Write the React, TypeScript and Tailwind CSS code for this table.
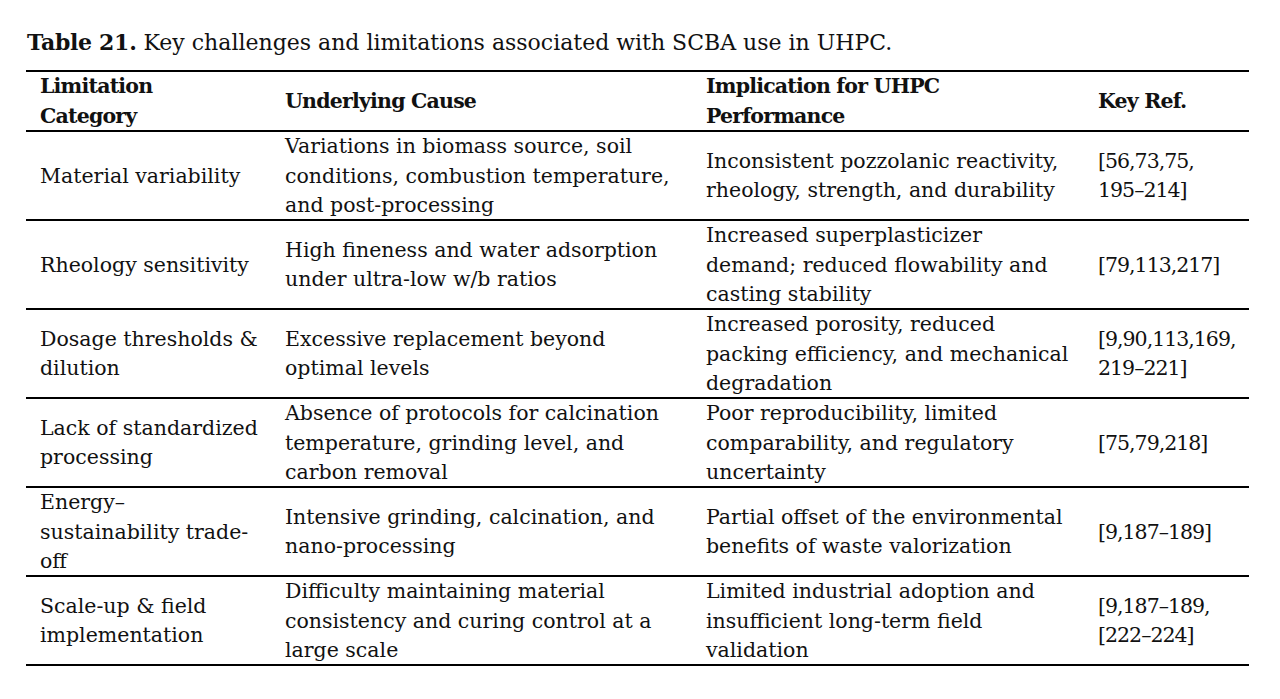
const rows: { cells: string[][] }[] = [
  {
    cells: [
      ["Material variability"],
      ["Variations in biomass source, soil", "conditions, combustion temperature,", "and post-processing"],
      ["Inconsistent pozzolanic reactivity,", "rheology, strength, and durability"],
      ["[56,73,75,", "195–214]"],
    ],
  },
  {
    cells: [
      ["Rheology sensitivity"],
      ["High fineness and water adsorption", "under ultra-low w/b ratios"],
      ["Increased superplasticizer", "demand; reduced flowability and", "casting stability"],
      ["[79,113,217]"],
    ],
  },
  {
    cells: [
      ["Dosage thresholds &", "dilution"],
      ["Excessive replacement beyond", "optimal levels"],
      ["Increased porosity, reduced", "packing efficiency, and mechanical", "degradation"],
      ["[9,90,113,169,", "219–221]"],
    ],
  },
  {
    cells: [
      ["Lack of standardized", "processing"],
      ["Absence of protocols for calcination", "temperature, grinding level, and", "carbon removal"],
      ["Poor reproducibility, limited", "comparability, and regulatory", "uncertainty"],
      ["[75,79,218]"],
    ],
  },
  {
    cells: [
      ["Energy–", "sustainability trade-", "off"],
      ["Intensive grinding, calcination, and", "nano-processing"],
      ["Partial offset of the environmental", "benefits of waste valorization"],
      ["[9,187–189]"],
    ],
  },
  {
    cells: [
      ["Scale-up & field", "implementation"],
      ["Difficulty maintaining material", "consistency and curing control at a", "large scale"],
      ["Limited industrial adoption and", "insufficient long-term field", "validation"],
      ["[9,187–189,", "[222–224]"],
    ],
  },
];

const header: string[][] = [
  ["Limitation", "Category"],
  ["Underlying Cause"],
  ["Implication for UHPC", "Performance"],
  ["Key Ref."],
];

const Cell = ({ lines, className = "" }: { lines: string[]; className?: string }) => (
  <div className={`flex flex-col justify-center pl-[14px] ${className}`}>
    {lines.map((l, i) => (
      <span key={i} className="block whitespace-nowrap">
        {l}
      </span>
    ))}
  </div>
);

export default function App() {
  return (
    <div
      className="w-[1280px] h-[699px] bg-white text-[#111] pt-[27px] pl-[26px] text-[20.5px] leading-[29.5px]"
      style={{ fontFamily: '"DejaVu Serif", "Liberation Serif", serif' }}
    >
      <p className="pl-[1px] text-[22px] leading-[30px]">
        <span className="font-bold tracking-[-0.3px]">Table 21.</span> Key challenges and limitations associated with SCBA use in UHPC.
      </p>
      <div className="mt-[12px] w-[1223px] border-t-2 border-black">
        <div className="grid grid-cols-[245px_421px_392px_165px] h-[60px] border-b-2 border-black">
          {header.map((c, i) => (
            <Cell key={i} lines={c} className="font-bold tracking-[-0.8px]" />
          ))}
        </div>
        {rows.map((r, i) => (
          <div
            key={i}
            className="grid grid-cols-[245px_421px_392px_165px] h-[89px] border-b-2 border-black"
          >
            {r.cells.map((c, j) => (
              <Cell key={j} lines={c} className={j === 3 ? "tracking-[-1px]" : ""} />
            ))}
          </div>
        ))}
      </div>
    </div>
  );
}
